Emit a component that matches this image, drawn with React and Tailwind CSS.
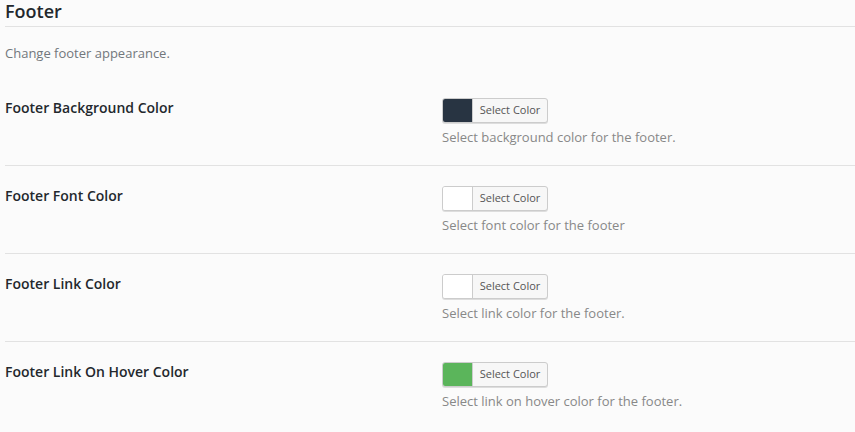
import React from "react";

const rows = [
  { label: "Footer Background Color", color: "bg-[#283442]", desc: "Select background color for the footer." },
  { label: "Footer Font Color", color: "bg-white", desc: "Select font color for the footer" },
  { label: "Footer Link Color", color: "bg-white", desc: "Select link color for the footer." },
  { label: "Footer Link On Hover Color", color: "bg-[#5bb55b]", desc: "Select link on hover color for the footer." },
];

function ColorButton({ color }) {
  return (
    <div className="flex h-[25px] w-[106px] overflow-hidden rounded-[3px] border border-[#cccccc] bg-[#f7f7f7] shadow-[0_1px_0_#ddd]">
      <div className={`w-[30px] border-r border-[#cccccc] ${color}`} />
      <div className="flex flex-1 items-center justify-center text-[11px] text-[#555]">Select Color</div>
    </div>
  );
}

export default function App() {
  return (
    <div className="min-h-[432px] w-[855px] bg-[#fbfbfb] pl-[5px] font-['Open_Sans',sans-serif] text-[#23282d]">
      <h2 className="border-b border-[#e2e2e2] pb-[4px] text-[18px] font-semibold leading-[22px]">Footer</h2>
      <p className="mt-[16px] text-[13px] leading-[20px] text-[#72777c]">Change footer appearance.</p>
      <div className="mt-[15px]">
        {rows.map((r, i) => (
          <div
            key={r.label}
            className={`grid grid-cols-[437px_1fr] pt-[20px] pb-[18px] ${i < rows.length - 1 ? "border-b border-[#e2e2e2]" : ""}`}
          >
            <div className="text-[14px] font-semibold leading-[20px]">{r.label}</div>
            <div>
              <ColorButton color={r.color} />
              <div className="mt-[5px] text-[13px] leading-[19px] text-[#888]">{r.desc}</div>
            </div>
          </div>
        ))}
      </div>
    </div>
  );
}
